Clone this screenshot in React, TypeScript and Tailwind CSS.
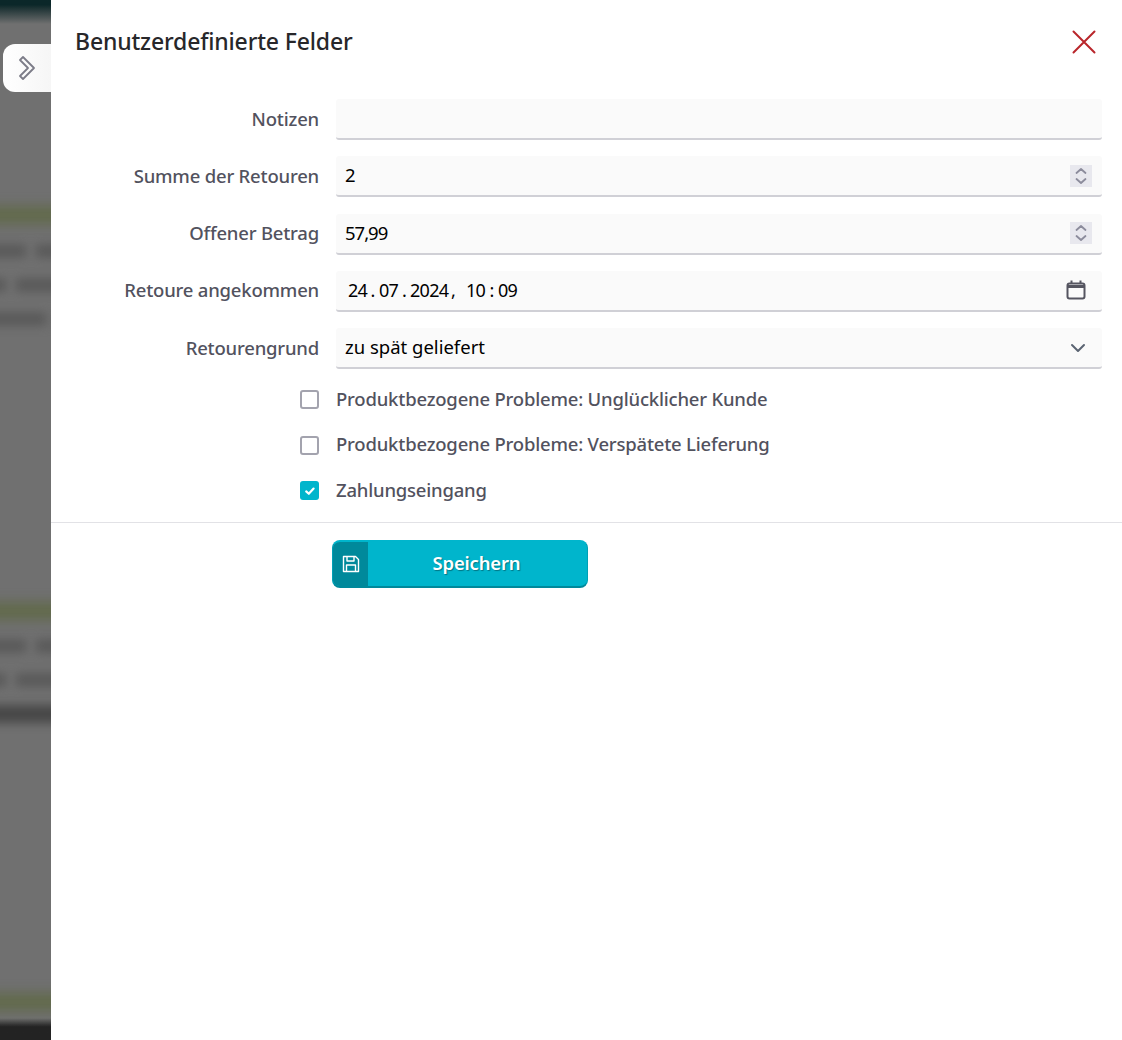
const labelCls = "w-[319px] pb-[2px] text-right text-[18.5px] font-medium leading-[24px] tracking-[-0.2px] text-[#52525e]";
const valueCls = "pb-[1px] text-[18.5px] leading-[24px] text-black";

function Spinner() {
  return (
    <div className="flex h-[22px] w-[22px] items-center justify-center bg-[#e8e8ee]">
      <svg width="14" height="18" viewBox="0 0 14 18" fill="none" stroke="#8c8c9c" strokeWidth="1.8" strokeLinecap="round" strokeLinejoin="round">
        <path d="M2.5 6 7 2l4.5 4" />
        <path d="M2.5 12 7 16l4.5-4" />
      </svg>
    </div>
  );
}

function Field({ label, children, right }: { label: string; children?: React.ReactNode; right?: React.ReactNode }) {
  return (
    <div className="flex items-center">
      <div className={labelCls}>{label}</div>
      <div className="ml-[17px] flex h-[41px] w-[766px] items-center justify-between rounded-[3px] border-b-2 border-[#d0d0d6] bg-[#fafafa] pl-[9px] pr-[10px]">
        <div className={valueCls}>{children}</div>
        {right}
      </div>
    </div>
  );
}

function Check({ label, checked }: { label: string; checked?: boolean }) {
  return (
    <div className="flex h-[19px] items-center pl-[300px]">
      {checked ? (
        <div className="flex h-[19px] w-[19px] items-center justify-center rounded-[3px] bg-[#00b5cc]">
          <svg width="12" height="12" viewBox="0 0 12 12" fill="none" stroke="#fff" strokeWidth="2.2" strokeLinecap="round" strokeLinejoin="round">
            <path d="M2.2 6.4 4.8 8.8 9.6 3.6" />
          </svg>
        </div>
      ) : (
        <div className="h-[19px] w-[19px] rounded-[3px] border-2 border-[#a3a3ae] bg-white" />
      )}
      <span className="ml-[17px] pb-[2px] text-[18.5px] font-medium leading-[24px] tracking-[-0.2px] text-[#52525e]">{label}</span>
    </div>
  );
}

function BlurRow({ mt, first }: { mt: string; first: string }) {
  return (
    <div className={`-mx-4 flex h-[14px] gap-[10px] blur-[5px] ${mt}`}>
      <div className={`bg-[#5a5a5a] ${first}`} />
      <div className="flex-1 bg-[#5a5a5a]" />
    </div>
  );
}

function Backdrop() {
  const band = "-mx-4 h-[18px] bg-[#626a4c] blur-[6px]";
  return (
    <div className="flex w-[51px] shrink-0 flex-col overflow-hidden bg-[#707070]">
      <div className="h-[24px] bg-gradient-to-b from-[#0b2729] from-20% to-[#707070]" />
      <div className={`mt-[182px] ${band}`} />
      <BlurRow mt="mt-[20px]" first="w-[42px]" />
      <BlurRow mt="mt-[20px]" first="w-[22px]" />
      <BlurRow mt="mt-[20px]" first="w-[62px]" />
      <div className={`mt-[276px] ${band}`} />
      <BlurRow mt="mt-[19px]" first="w-[42px]" />
      <BlurRow mt="mt-[20px]" first="w-[22px]" />
      <div className="-mx-4 mt-[18px] h-[18px] bg-[#484848] blur-[5px]" />
      <div className={`mt-[270px] ${band}`} />
      <div className="mt-auto h-[22px] bg-gradient-to-b from-[#707070] to-[#232323] to-40%" />
    </div>
  );
}

export default function App() {
  return (
    <div className="relative flex h-[1040px] w-[1122px] overflow-hidden bg-white" style={{ fontFamily: '"Noto Sans", sans-serif' }}>
      <Backdrop />
      <div className="absolute left-[3px] top-[44px] flex h-12 w-12 items-center rounded-l-[12px] bg-gradient-to-r from-white to-[#f6f6f6] pl-[15px]">
        <svg width="20" height="26" viewBox="0 0 20 26" fill="none" stroke="#7c7c88" strokeWidth="1.8" strokeLinejoin="round">
          <path d="M2 5 5 2l11 11L5 24l-3-3 8-8Z" />
        </svg>
      </div>
      <div className="flex min-w-0 flex-1 flex-col">
        <div className="flex h-[99px] items-start justify-between pl-6 pr-[26px] pt-[25px]">
          <h1 className="text-[23px] font-medium leading-[32px] tracking-[-0.16px] text-[#27272a]">Benutzerdefinierte Felder</h1>
          <svg className="mt-[5px]" width="24" height="24" viewBox="0 0 24 24" fill="none" stroke="#b9262b" strokeWidth="2" strokeLinecap="round">
            <path d="M1.5 1.5l21 21M22.5 1.5l-21 21" />
          </svg>
        </div>
        <div className="-ml-[51px] flex flex-col gap-[16.25px]">
          <Field label="Notizen" />
          <Field label="Summe der Retouren" right={<Spinner />}>2</Field>
          <Field label="Offener Betrag" right={<Spinner />}><span className="tracking-[-1px]">57,99</span></Field>
          <Field
            label="Retoure angekommen"
            right={
              <svg className="mr-[6px]" width="20" height="20" viewBox="0 0 20 20" fill="none" stroke="#555560" strokeWidth="2" strokeLinejoin="round">
                <rect x="1.5" y="3.5" width="17" height="15" rx="2" />
                <path d="M1.5 6.5h17" strokeWidth="3" />
                <path d="M5.5 0.5v3M14.5 0.5v3" />
              </svg>
            }
          >
            <span className="ml-[3px] flex items-center text-[18px] tracking-[-0.7px]">
              <span className="w-[18px]">24</span>
              <span className="w-[13px] text-center">.</span>
              <span className="w-[19px]">07</span>
              <span className="w-[12px] text-center">.</span>
              <span className="w-[38px]">2024</span>
              <span className="w-[18px] pl-[3px]">,</span>
              <span className="w-[19px]">10</span>
              <span className="w-[13px] text-center">:</span>
              <span>09</span>
            </span>
          </Field>
          <Field
            label="Retourengrund"
            right={
              <svg className="mr-[6px]" width="16" height="10" viewBox="0 0 16 10" fill="none" stroke="#5b6472" strokeWidth="2" strokeLinecap="round" strokeLinejoin="round">
                <path d="M2 2l6 6 6-6" />
              </svg>
            }
          >
            zu spät geliefert
          </Field>
        </div>
        <div className="-ml-[51px] mt-[21px] flex flex-col gap-[26.5px]">
          <Check label="Produktbezogene Probleme: Unglücklicher Kunde" />
          <Check label="Produktbezogene Probleme: Verspätete Lieferung" />
          <Check label="Zahlungseingang" checked />
        </div>
        <div className="mt-[22px] h-px bg-[#e2e2e6]" />
        <div className="-ml-[51px] mt-[17px] pl-[332px]">
          <button className="flex h-12 w-64 overflow-hidden rounded-[8px] border-x border-t-2 border-b-2 border-x-[#00a0b5] border-t-[#00b5cc] border-b-[#00899b] bg-[#00b5cc]">
            <span className="flex h-full w-[35px] items-center justify-center bg-[#00899b] pl-[1px]">
              <svg width="18" height="18" viewBox="0 0 18 18" fill="none" stroke="#fff" strokeWidth="1.4" strokeLinejoin="round">
                <path d="M1.5 1.5h12l3 3v12h-15Z" />
                <path d="M5 1.5v4.5h7V1.5M4.5 16.5V10h9v6.5" />
              </svg>
            </span>
            <span className="flex h-full flex-1 items-center justify-center pb-[2px] pr-[2px] text-[18.5px] font-semibold tracking-[-0.2px] text-white [text-shadow:1px_1px_1px_rgba(0,0,0,0.35)]">
              Speichern
            </span>
          </button>
        </div>
      </div>
    </div>
  );
}
